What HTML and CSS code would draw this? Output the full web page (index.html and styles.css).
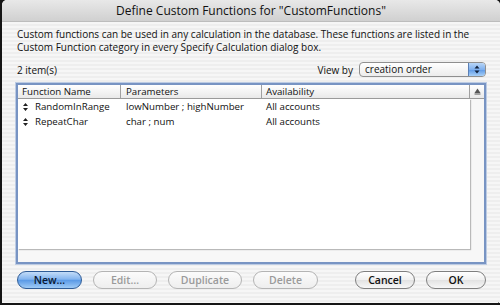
FILE: index.html
```html
<!DOCTYPE html>
<html lang="en">
<head>
<meta charset="UTF-8">
<title>Define Custom Functions</title>
<link rel="stylesheet" href="styles.css">
</head>
<body>

<div class="window">
  <div class="titlebar">Define Custom Functions for "CustomFunctions"</div>

  <div class="content">
    <div class="desc">Custom functions can be used in any calculation in the database. These functions are listed in the Custom Function category in every Specify Calculation dialog box.</div>

    <div class="meta-row">
      <div class="count">2 item(s)</div>
      <div class="view-by">
        <span>View by</span>
        <div class="popup">
          <span class="popup-label">creation order</span>
          <span class="popup-arrows">
            <svg width="6" height="9" viewBox="0 0 6 9"><path d="M3 0.5 L5.5 3.5 H0.5 Z M3 8.5 L5.5 5.5 H0.5 Z" fill="#10203a"/></svg>
          </span>
        </div>
      </div>
    </div>

    <div class="table-frame">
      <div class="thead">
        <div class="th col-name">Function Name</div>
        <div class="th col-params">Parameters</div>
        <div class="th col-avail">Availability</div>
        <div class="th col-corner">
          <svg width="7" height="7" viewBox="0 0 7 7"><path d="M3.5 0.5 L6.5 5 H0.5 Z" fill="#555"/><rect x="0.5" y="5.5" width="6" height="1" fill="#555"/></svg>
        </div>
      </div>
      <div class="tbody-wrap">
        <div class="tbody">
          <div class="row">
            <div class="td col-name"><span class="handle"><svg width="5" height="8" viewBox="0 0 5 8"><path d="M2.5 0 L5 3 H0 Z M2.5 8 L5 5 H0 Z" fill="#222"/></svg></span>RandomInRange</div>
            <div class="td col-params">lowNumber ; highNumber</div>
            <div class="td col-avail">All accounts</div>
          </div>
          <div class="row">
            <div class="td col-name"><span class="handle"><svg width="5" height="8" viewBox="0 0 5 8"><path d="M2.5 0 L5 3 H0 Z M2.5 8 L5 5 H0 Z" fill="#222"/></svg></span>RepeatChar</div>
            <div class="td col-params">char ; num</div>
            <div class="td col-avail">All accounts</div>
          </div>
        </div>
        <div class="vstrip"></div>
      </div>
      <div class="hstrip"></div>
    </div>

    <div class="buttons">
      <div class="btn-group">
        <button class="btn btn-default btn-new">New…</button>
        <button class="btn btn-disabled btn-edit">Edit…</button>
        <button class="btn btn-disabled btn-dup">Duplicate</button>
        <button class="btn btn-disabled btn-del">Delete</button>
      </div>
      <div class="btn-group">
        <button class="btn btn-cancel">Cancel</button>
        <button class="btn btn-ok">OK</button>
      </div>
    </div>
  </div>

  <div class="grip">
    <svg width="10" height="10" viewBox="0 0 10 10"><path d="M9 2 L2 9 M9 5 L5 9 M9 8 L8 9" stroke="#8a8a8a" stroke-width="1"/></svg>
  </div>
</div>

</body>
</html>
```

FILE: styles.css
```css
body {
  margin: 0;
  padding: 0;
  background-color: #151515;
  font-family: 'Open Sans', 'Liberation Sans', sans-serif;
  color: #111;
}

.window {
  position: relative;
  margin-left: 2px;
  width: 498px;
  height: 303px;
  border-radius: 5px 5px 0 0;
  overflow: hidden;
  background: repeating-linear-gradient(to bottom, #eeeeee 0, #eeeeee 2px, #f6f6f6 2px, #f6f6f6 4px);
}

.titlebar {
  height: 21px;
  line-height: 21px;
  text-align: center;
  font-size: 12px;
  background: linear-gradient(#e8e8e8, #d0d0d0);
  border-bottom: 1px solid #bdbdbd;
  color: #111;
}

.content {
  padding: 6px 14px 0 14px;
}

.desc {
  font-size: 10px;
  line-height: 13px;
  padding-left: 1px;
}

.meta-row {
  display: flex;
  justify-content: space-between;
  align-items: center;
  margin-top: 8px;
  height: 15px;
  font-size: 10px;
}

.count {
  padding-left: 1px;
}

.view-by {
  display: flex;
  align-items: center;
  gap: 6px;
}

.popup {
  display: flex;
  width: 125px;
  height: 13px;
  border: 1px solid #8f8f8f;
  border-radius: 4px;
  overflow: hidden;
  background: linear-gradient(#ffffff, #ececec);
}

.popup-label {
  flex: 1;
  padding-left: 5px;
  line-height: 13px;
}

.popup-arrows {
  width: 16px;
  display: flex;
  align-items: center;
  justify-content: center;
  border-left: 1px solid #5b7fb5;
  background: linear-gradient(#b9d6f7 0%, #7fb0ee 50%, #5c98e6 51%, #a8d0f7 100%);
}

.table-frame {
  margin-top: 6px;
  height: 177px;
  border: 2px solid #7894c3;
  box-shadow: 0 0 0 1px #bccbe3;
  background-color: #f7f7f7;
  display: flex;
  flex-direction: column;
  font-size: 9.7px;
}

.thead {
  display: flex;
  height: 13px;
  line-height: 13px;
  background: linear-gradient(#ffffff, #e9e9e9);
  border-bottom: 1px solid #9a9a9a;
}

.th {
  border-right: 1px solid #a0a0a0;
}

.col-name {
  width: 98px;
  padding-left: 4px;
}

.col-params {
  width: 135px;
  padding-left: 5px;
}

.col-avail {
  width: 203px;
  padding-left: 4px;
}

.col-corner {
  flex: 1;
  border-right: none;
  display: flex;
  align-items: center;
  justify-content: center;
}

.tbody-wrap {
  flex: 1;
  display: flex;
}

.tbody {
  width: 452px;
  background-color: #fff;
  box-shadow: 1px 1px 1px rgba(0, 0, 0, 0.25);
}

.vstrip {
  flex: 1;
}

.hstrip {
  height: 13px;
}

.row {
  display: flex;
  height: 15px;
  line-height: 15px;
}

.td.col-name {
  border-right: 1px solid transparent;
  display: flex;
  align-items: center;
}

.td.col-params {
  border-right: 1px solid transparent;
}

.handle {
  display: inline-flex;
  margin: 0 7px 0 1px;
}

.buttons {
  display: flex;
  justify-content: space-between;
  margin-top: 7px;
  padding-left: 1px;
}

.btn-group {
  display: flex;
  gap: 11px;
}

.btn {
  height: 18px;
  border-radius: 9px;
  border: 1px solid #7f7f7f;
  background: linear-gradient(#ffffff 0%, #f0f0f0 50%, #e2e2e2 51%, #f7f7f7 100%);
  font-family: 'Open Sans', 'Liberation Sans', sans-serif;
  font-size: 10.5px;
  font-weight: 600;
  color: #111;
  padding: 0;
  line-height: 16px;
}

.btn-default {
  border-color: #2f5c97;
  background: linear-gradient(#c3dcf8 0%, #84b5ef 45%, #5b9ae6 52%, #9fcbf6 100%);
  color: #0b1730;
}

.btn-disabled {
  border-color: #b4b4b4;
  color: #9a9a9a;
  background: linear-gradient(#fbfbfb, #eeeeee);
}

.btn-new { width: 65px; }
.btn-edit { width: 64px; }
.btn-dup { width: 74px; }
.btn-del { width: 65px; }
.btn-cancel { width: 60px; }
.btn-ok { width: 60px; }

.grip {
  position: absolute;
  right: 0;
  bottom: 0;
  width: 10px;
  height: 10px;
}
```
